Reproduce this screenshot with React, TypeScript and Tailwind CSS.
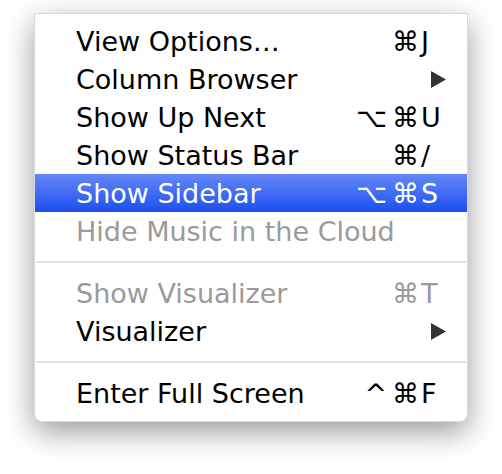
import React from 'react';

type Item =
  | { kind: 'sep' }
  | {
      kind: 'item';
      label: string;
      mods?: string[];
      keyChar?: string;
      submenu?: boolean;
      disabled?: boolean;
      active?: boolean;
    };

const items: Item[] = [
  { kind: 'item', label: 'View Options…', mods: ['⌘'], keyChar: 'J' },
  { kind: 'item', label: 'Column Browser', submenu: true },
  { kind: 'item', label: 'Show Up Next', mods: ['⌥', '⌘'], keyChar: 'U' },
  { kind: 'item', label: 'Show Status Bar', mods: ['⌘'], keyChar: '/' },
  { kind: 'item', label: 'Show Sidebar', mods: ['⌥', '⌘'], keyChar: 'S', active: true },
  { kind: 'item', label: 'Hide Music in the Cloud', disabled: true },
  { kind: 'sep' },
  { kind: 'item', label: 'Show Visualizer', mods: ['⌘'], keyChar: 'T', disabled: true },
  { kind: 'item', label: 'Visualizer', submenu: true },
  { kind: 'sep' },
  { kind: 'item', label: 'Enter Full Screen', mods: ['^', '⌘'], keyChar: 'F' },
];

function SubmenuArrow({ active }: { active?: boolean }) {
  return (
    <svg width="15" height="17" viewBox="0 0 15 17" className="block shrink-0">
      <path d="M0 0 L15 8.5 L0 17 Z" fill={active ? '#ffffff' : '#333333'} />
    </svg>
  );
}

function MenuRow({ item }: { item: Extract<Item, { kind: 'item' }> }) {
  const color = item.active ? 'text-white' : item.disabled ? 'text-[#9a9a9a]' : 'text-black';
  return (
    <div
      className={`flex h-[38px] items-center pl-[41px] pr-[21px] ${color} ${
        item.active ? 'bg-gradient-to-b from-[#6587f6] to-[#1b4cf0]' : ''
      }`}
    >
      <span className="min-w-0 flex-1 whitespace-nowrap">{item.label}</span>
      {item.submenu ? (
        <SubmenuArrow active={item.active} />
      ) : item.mods ? (
        <span className="flex shrink-0 items-center gap-[5px] whitespace-nowrap">
          {item.mods.map((m, i) => (
            <span key={i}>{m}</span>
          ))}
        </span>
      ) : null}
      {item.keyChar ? <span className="w-[27px] shrink-0 pl-[2px]">{item.keyChar}</span> : null}
    </div>
  );
}

export default function App() {
  return (
    <div className="h-[474px] w-[502px] bg-white pl-[34px] pt-[13px]">
      <div className="w-[434px] rounded-b-[8px] border border-[#d9d9d9] bg-white pt-[8px] pb-[9px] shadow-[0_10px_30px_rgba(0,0,0,0.4)] font-['DejaVu_Sans',sans-serif] text-[27px] leading-none">
        {items.map((item, i) =>
          item.kind === 'sep' ? (
            <div key={i} className="flex h-[24px] items-center px-[1px]">
              <div className="h-[2px] w-full bg-[#e3e3e3]" />
            </div>
          ) : (
            <MenuRow key={i} item={item} />
          ),
        )}
      </div>
    </div>
  );
}
